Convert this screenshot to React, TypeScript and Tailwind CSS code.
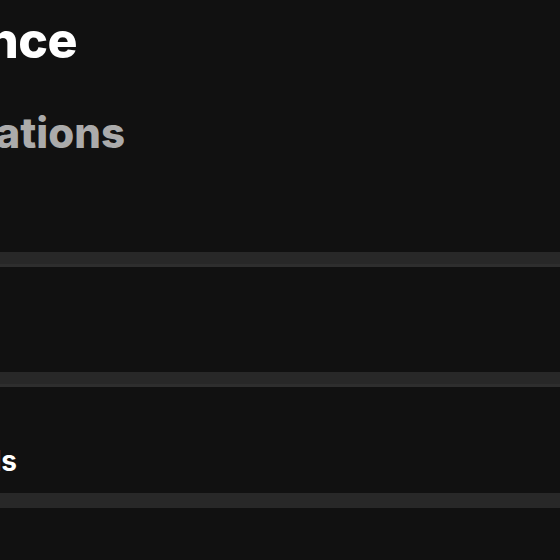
export default function App() {
  return (
    <div className="w-[560px] h-[560px] overflow-hidden bg-[#111111] font-['Inter','Liberation_Sans',sans-serif]">
      {/* Title block */}
      <div className="pt-[15px] h-[112px]">
        <div className="w-[77px] flex justify-end whitespace-nowrap">
          <h1 className="text-[50px] leading-none font-extrabold text-white tracking-[-0.5px]">Appearance</h1>
        </div>
      </div>
      <div className="h-[140px]">
        <div className="w-[125px] flex justify-end whitespace-nowrap">
          <h2 className="text-[42px] leading-none font-extrabold text-[#ababab]">Notifications</h2>
        </div>
      </div>

      <div className="h-[15px] bg-[#282828] border-b-[3px] border-[#2e2e2e]" />
      <div className="h-[105px]" />
      <div className="h-[15px] bg-[#282828] border-b-[3px] border-[#2e2e2e]" />
      <div className="h-[106px] flex items-end pb-[18px]">
        <div className="w-[17px] flex justify-end whitespace-nowrap">
          <span className="text-[28px] leading-none font-bold text-white">Sounds</span>
        </div>
      </div>
      <div className="h-[15px] bg-[#282828]" />
    </div>
  );
}
